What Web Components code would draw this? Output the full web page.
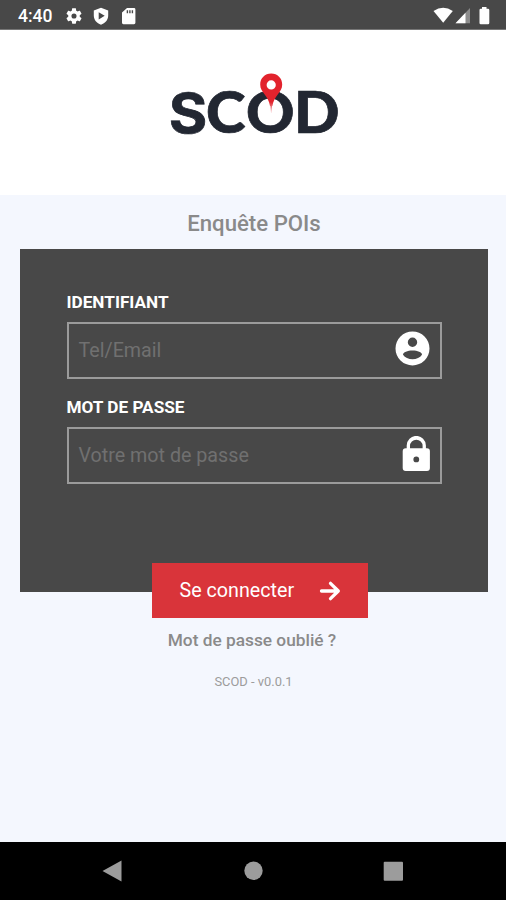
<!DOCTYPE html>
<html lang="fr">
<head>
<meta charset="utf-8">
<title>SCOD</title>
<style>
html, body { margin: 0; height: 100%; }
body { font-family: Roboto, "Liberation Sans", sans-serif; background: #f4f7fe; overflow: hidden; }
</style>
</head>
<body>
<scod-app></scod-app>
<script>
function define(name, html) {
  customElements.define(name, class extends HTMLElement {
    constructor() {
      super();
      const t = document.createElement('template');
      t.innerHTML = html;
      this.attachShadow({ mode: 'open' }).append(t.content.cloneNode(true));
    }
  });
}

define('status-bar', `
<style>
:host { display: flex; box-sizing: border-box; height: 30px; padding: 0 15px 0 18px; align-items: center; background: #484848; border-bottom: 1px solid #777; color: #fff; }
.time { width: 48px; font-size: 17.5px; font-weight: 500; line-height: 20px; padding-top: 3px; white-space: nowrap; }
svg { display: block; fill: #fff; margin-top: 2px; }
.right { margin-left: auto; }
</style>
<span class="time">4:40</span>
<svg width="72" height="20" viewBox="66 5.500 72 20">
  <path transform="translate(64.4 5.9) scale(.8)" fill-rule="evenodd" d="M19.14 12.94c.04-.3.06-.61.06-.94 0-.32-.02-.64-.07-.94l2.03-1.58c.18-.14.23-.41.12-.61l-1.92-3.32c-.12-.22-.37-.29-.59-.22l-2.39.96c-.5-.38-1.03-.7-1.62-.94l-.36-2.54c-.04-.24-.24-.41-.48-.41h-3.84c-.24 0-.43.17-.47.41l-.36 2.54c-.59.24-1.13.57-1.62.94l-2.39-.96c-.22-.08-.47 0-.59.22L2.74 8.87c-.12.21-.08.47.12.61l2.03 1.58c-.05.3-.09.63-.09.94s.02.64.07.94l-2.03 1.58c-.18.14-.23.41-.12.61l1.92 3.32c.12.22.37.29.59.22l2.39-.96c.5.38 1.03.7 1.62.94l.36 2.54c.05.24.24.41.48.41h3.84c.24 0 .44-.17.47-.41l.36-2.54c.59-.24 1.13-.56 1.62-.94l2.39.96c.22.08.47 0 .59-.22l1.92-3.32c.12-.22.07-.47-.12-.61l-2.01-1.58zM12 15.2A3.2 3.2 0 1 1 12 8.8a3.2 3.2 0 0 1 0 6.4z"/>
  <path fill-rule="evenodd" d="M101 7.3l7.2 2.8v5c0 4.500-3 7.500-7.200 9.100-4.200-1.600-7.200-4.600-7.200-9.100v-5zM98.700 11.700v7.200l6-3.600z"/>
  <path fill-rule="evenodd" d="M127 7.500h7q1.400 0 1.400 1.400v13.400q0 1.400-1.400 1.400h-10.600q-1.400 0-1.400-1.400v-10.300zM126.700 9.800v3h1.400v-3zM129.200 9.800v3h1.400v-3zM131.700 9.800v3h1.400v-3z"/>
</svg>
<svg class="right" width="58" height="20" viewBox="433 5.500 58 20">
  <path d="M433.500 10.500Q443.200 4 452.800 10.500L443.200 22.300z"/>
  <path d="M470 7.500V22.800H455.500z" fill="#8c8c8c"/>
  <path d="M465.500 12.200V22.800H455.500z"/>
  <path d="M482 6.500h4.500v1.700h1.500q1.300 0 1.300 1.300v13q0 1.300-1.300 1.300h-7.200q-1.300 0-1.300-1.300v-13q0-1.300 1.300-1.300h1.200z"/>
</svg>`);

define('brand-header', `
<style>
:host { display: flex; height: 165px; background: #fff; justify-content: center; }
svg { display: block; width: 240px; height: 120px; margin-top: 15px; }
text { font-family: Lato, sans-serif; font-weight: 900; font-size: 56.500px; fill: #222732; stroke: #222732; stroke-width: .7px; }
.s { font-family: Inter, sans-serif; font-weight: 700; font-size: 55.500px; }
</style>
<svg viewBox="133 45 240 120">
  <defs><linearGradient id="tip" x1="0" y1="0" x2="0" y2="1"><stop offset=".72" stop-color="#e2232d"/><stop offset="1" stop-color="#e2232d" stop-opacity=".2"/></linearGradient></defs>
  <text transform="scale(1.060 1)" x="159.200 194.300 232.100 277.400" y="132.800"><tspan class="s">S</tspan>COD</text>
  <path fill="url(#tip)" fill-rule="evenodd" d="M271.200 73.600c-6.300 0-11 4.800-11 10.900 0 4.200 2 6.800 4.300 9.800 2.500 3.200 4.500 6.200 5.500 11.700h.4l.6 7h.4l.6-7h.4c1-5.500 3-8.500 5.500-11.700 2.300-3 4.300-5.600 4.300-9.800 0-6.100-4.700-10.900-11-10.900zM271.200 80.300a4.600 4.600 0 1 1 0 9.200 4.600 4.600 0 0 1 0-9.200z"/>
</svg>`);

define('login-field', `
<style>
:host { display: block; }
label { display: block; height: 20px; line-height: 20px; font-size: 17.200px; font-weight: 700; color: #fff; white-space: nowrap; }
.box { box-sizing: border-box; height: 57px; margin-top: 10px; border: 2px solid #9b9b9b; display: flex; align-items: center; justify-content: space-between; padding: 0 10px; color: #707070; font-size: 19.700px; }
.hint { white-space: nowrap; }
</style>
<label><slot name="label"></slot></label>
<div class="box"><span class="hint"><slot></slot></span><slot name="icon"></slot></div>`);

define('login-button', `
<style>
:host { display: flex; box-sizing: border-box; width: 216px; height: 55px; padding: 0 27px 0 28px; align-items: center; justify-content: space-between; background: #d9343a; color: #fff; font-size: 19.700px; white-space: nowrap; }
svg { display: block; }
</style>
<span><slot></slot></span>
<svg width="22" height="22" viewBox="0 0 22 22" fill="none" stroke="#fff" stroke-width="3.300" stroke-linecap="round" stroke-linejoin="round"><path d="M2.500 11H19M11.500 3.300L19.300 11L11.500 18.700"/></svg>`);

define('login-panel', `
<style>
:host { display: flex; flex-direction: column; align-items: center; box-sizing: border-box; width: 468px; height: 343px; margin-left: 20px; padding: 43px 46px 0; background: #484848; }
login-field { width: 375px; margin-bottom: 18px; }
login-button { margin-top: 61px; flex-shrink: 0; margin-left: 11px; }
svg { display: block; fill: #fff; }
</style>
<login-field><span slot="label">IDENTIFIANT</span><span>Tel/Email</span>
  <svg slot="icon" width="37" height="40" viewBox="393 331 37 40"><path fill-rule="evenodd" d="M412.500 331.400a17 17 0 1 0 0 34 17 17 0 0 0 0-34zM412.500 337.500a4.700 4.700 0 1 1 0 9.400 4.700 4.700 0 0 1 0-9.400zM412.500 350.500c5 0 9.500 1.600 9.500 4.300-2 2.900-5.500 4.500-9.500 4.500s-7.500-1.600-9.500-4.500c0-2.700 4.500-4.300 9.500-4.300z"/></svg>
</login-field>
<login-field><span slot="label">MOT DE PASSE</span><span>Votre mot de passe</span>
  <svg slot="icon" width="28" height="40" viewBox="402 436 28 40"><path fill-rule="evenodd" d="M406.700 448.300v-2.800a9.600 9.600 0 0 1 19.200 0v2.800h1q3 0 3 3v16.700q0 3-3 3h-21.200q-3 0-3-3v-16.700q0-3 3-3zM410 448.300h12.600v-2.300a6.300 6.300 0 0 0-12.600 0zM416.300 456.500a2.900 2.900 0 1 0 0 5.800 2.900 2.900 0 0 0 0-5.800z"/></svg>
</login-field>
<login-button>Se connecter</login-button>`);

define('nav-bar', `
<style>
:host { display: flex; height: 58px; background: #000; flex-shrink: 0; }
svg { display: block; fill: #9c9c9c; }
</style>
<svg width="506" height="58" viewBox="0 842 506 58"><path d="M102.500 871L121.500 860.500V881.500z"/><circle cx="253.500" cy="870.800" r="9.200"/><rect x="383.700" y="861.700" width="19.300" height="19" rx="1"/></svg>`);

define('scod-app', `
<style>
:host { display: flex; flex-direction: column; width: 506px; height: 900px; background: #f4f7fe; }
status-bar, brand-header, login-panel { flex-shrink: 0; }
h1 { margin: 0 0 0 2px; height: 54px; line-height: 56px; font-size: 22.200px; font-weight: 500; color: #8a8a8a; text-align: center; }
.forgot { margin-top: 38px; height: 21px; line-height: 21px; text-align: center; font-size: 17.300px; font-weight: 500; color: #8a8a8a; margin-right: 2px; }
.version { margin-top: 21px; height: 18px; line-height: 19px; text-align: center; font-size: 12.900px; color: #9c9c9c; margin-left: 1px; }
nav-bar { margin-top: auto; }
</style>
<status-bar></status-bar>
<brand-header></brand-header>
<h1>Enquête POIs</h1>
<login-panel></login-panel>
<div class="forgot">Mot de passe oublié ?</div>
<div class="version">SCOD - v0.0.1</div>
<nav-bar></nav-bar>`);
</script>
</body>
</html>
